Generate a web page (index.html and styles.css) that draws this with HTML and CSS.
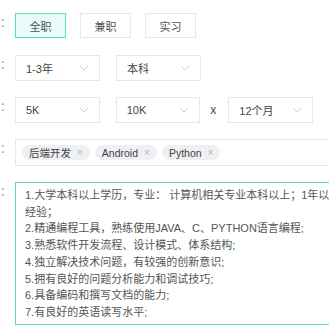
FILE: index.html
```html
<!DOCTYPE html>
<html lang="zh-CN">
<head>
    <meta charset="UTF-8">
    <meta name="viewport" content="width=device-width, initial-scale=1.0">
    <title>职位要求</title>
    <link rel="stylesheet" href="styles.css">
</head>
<body>
    <div class="form">
        <div class="row row-type">
            <span class="label">：</span>
            <div class="radio-group">
                <span class="radio active">全职</span>
                <span class="radio">兼职</span>
                <span class="radio">实习</span>
            </div>
        </div>
        <div class="row row-edu">
            <span class="label">：</span>
            <div class="select"><span>1-3年</span><svg class="arrow" viewBox="0 0 10 6"><path d="M1 1l4 4 4-4"/></svg></div>
            <div class="select"><span>本科</span><svg class="arrow" viewBox="0 0 10 6"><path d="M1 1l4 4 4-4"/></svg></div>
        </div>
        <div class="row row-salary">
            <span class="label">：</span>
            <div class="select"><span>5K</span><svg class="arrow" viewBox="0 0 10 6"><path d="M1 1l4 4 4-4"/></svg></div>
            <div class="select"><span>10K</span><svg class="arrow" viewBox="0 0 10 6"><path d="M1 1l4 4 4-4"/></svg></div>
            <span class="times">x</span>
            <div class="select"><span>12个月</span><svg class="arrow" viewBox="0 0 10 6"><path d="M1 1l4 4 4-4"/></svg></div>
        </div>
        <div class="row row-tags">
            <span class="label">：</span>
            <div class="tag-box">
                <span class="tag">后端开发<i>×</i></span>
                <span class="tag">Android<i>×</i></span>
                <span class="tag">Python<i>×</i></span>
            </div>
        </div>
        <div class="row row-desc">
            <span class="label">：</span>
            <div class="textarea">
                <p>1.大学本科以上学历，专业： 计算机相关专业本科以上；1年以</p>
                <p>经验；</p>
                <p>2.精通编程工具，熟练使用JAVA、C、PYTHON语言编程;</p>
                <p>3.熟悉软件开发流程、设计模式、体系结构;</p>
                <p>4.独立解决技术问题，有较强的创新意识;</p>
                <p>5.拥有良好的问题分析能力和调试技巧;</p>
                <p>6.具备编码和撰写文档的能力;</p>
                <p>7.有良好的英语读写水平;</p>
            </div>
        </div>
    </div>
</body>
</html>
```

FILE: styles.css
```css
body, html {
    margin: 0;
    padding: 0;
    background: #ffffff;
    overflow: hidden;
}
body {
    font-family: "Liberation Sans", "Noto Sans CJK SC", sans-serif;
    font-size: 11px;
    color: #606266;
}
.form {
    padding-top: 13px;
}
.row {
    display: flex;
    align-items: center;
    margin-bottom: 16px;
}
.label {
    width: 15px;
    flex: none;
    color: #999;
    font-family: "Noto Sans CJK SC", sans-serif;
    align-self: flex-start;
    line-height: 14px;
    margin-top: 2px;
}
.radio-group {
    display: flex;
    gap: 14px;
}
.radio {
    width: 51px;
    height: 25px;
    box-sizing: border-box;
    border: 1px solid #e4e7ed;
    display: flex;
    align-items: center;
    justify-content: center;
    color: #555;
}
.radio.active {
    border-color: #5cdccb;
    background: #e9fbf9;
}
.row-edu {
    margin-top: 17px;
}
.select {
    width: 85px;
    height: 26px;
    box-sizing: border-box;
    border: 1px solid #e4e7ed;
    display: flex;
    align-items: center;
    justify-content: space-between;
    padding: 0 10px 0 10px;
    margin-right: 16px;
    color: #444;
}
.arrow {
    width: 10px;
    height: 6px;
    fill: none;
    stroke: #c0c4cc;
    stroke-width: 0.8;
}
.times {
    margin: 0 12px 0 -6px;
    color: #3a4a6b;
    font-size: 12px;
}
.tag-box {
    flex: none;
    width: 400px;
    height: 27px;
    box-sizing: border-box;
    border: 1px solid #e4e7ed;
    display: flex;
    align-items: center;
    gap: 5px;
    padding-left: 6px;
}
.tag {
    height: 15px;
    display: flex;
    align-items: center;
    padding: 0 7px 0 7px;
    border-radius: 8px;
    background: #eef0f3;
    color: #3f3f3f;
    font-size: 10.5px;
}
.tag i {
    font-style: normal;
    color: #b0b4bb;
    margin-left: 6px;
    font-size: 10px;
}
.textarea {
    flex: none;
    width: 400px;
    box-sizing: border-box;
    border: 1px solid #62d8cb;
    padding: 4px 9px 3px;
    line-height: 16.7px;
    color: #555;
}
.textarea p {
    margin: 0;
    white-space: nowrap;
}
```
